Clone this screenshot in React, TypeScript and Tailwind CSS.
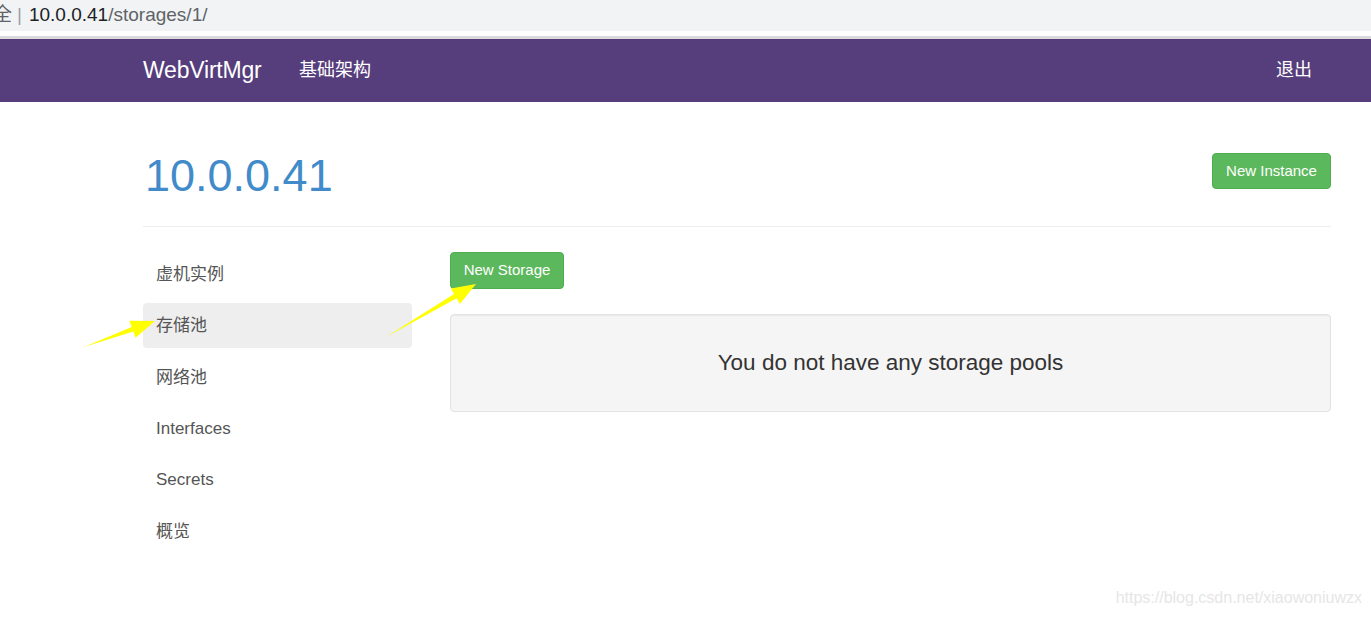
const sans = { fontFamily: '"Liberation Sans", "Noto Sans CJK SC", Arial, sans-serif' };

const arrow = (x1: number, y1: number, x2: number, y2: number, head = 24, hw = 9, sw = 2.5) => {
  const dx = x2 - x1;
  const dy = y2 - y1;
  const len = Math.hypot(dx, dy);
  const ux = dx / len;
  const uy = dy / len;
  const px = -uy;
  const py = ux;
  const bx = x2 - ux * head;
  const by = y2 - uy * head;
  const pts = [
    [x1, y1],
    [bx - px * sw, by - py * sw],
    [bx - px * hw, by - py * hw],
    [x2, y2],
    [bx + px * hw, by + py * hw],
    [bx + px * sw, by + py * sw],
  ];
  return pts.map((p) => p.join(",")).join(" ");
};

const navItems = ["虚机实例", "存储池", "网络池", "Interfaces", "Secrets", "概览"];

export default function App() {
  return (
    <div className="relative w-full h-[620px] overflow-hidden bg-white" style={sans}>
      {/* browser address bar */}
      <div className="h-[31px] bg-[#f1f3f4] flex items-center text-[19px]">
        <span className="ml-[-7px] text-[#5f6368]">全</span>
        <span className="ml-[5px] text-[#9aa0a6]">|</span>
        <span className="ml-[7px] text-[#202124]">10.0.0.41</span>
        <span className="text-[#5f6368]">/storages/1/</span>
      </div>
      <div className="h-[5px] bg-white" />
      <div className="h-[3px] bg-[#dadada]" />

      {/* navbar */}
      <nav className="h-[63px] bg-[#563d7c] flex items-center pl-[143px] pr-[59px] text-white">
        <span className="w-[156px] text-[23px] tracking-[-0.2px]">WebVirtMgr</span>
        <span className="text-[18px]">基础架构</span>
        <span className="ml-auto text-[18px]">退出</span>
      </nav>

      <main className="pl-[143px] pr-[40px]">
        <div className="flex justify-between items-start pt-[49px]">
          <h1 className="text-[45px] leading-[50px] text-[#428bca] pl-[2px]">10.0.0.41</h1>
          <button className="mt-[2px] h-[36px] w-[119px] rounded-[4px] bg-[#5cb85c] border border-[#4cae4c] text-white text-[15px]">
            New Instance
          </button>
        </div>
        <div className="mt-[25px] h-px bg-[#eeeeee]" />

        <div className="flex mt-[23px]">
          <ul className="w-[269px] flex flex-col gap-[6.4px] pt-[2px]">
            {navItems.map((item) => (
              <li
                key={item}
                className={
                  "h-[45px] flex items-center pl-[13px] rounded-[4px] text-[17px] text-[#555] " +
                  (item === "存储池" ? "bg-[#eeeeee]" : "")
                }
              >
                {item}
              </li>
            ))}
          </ul>

          <div className="flex-1 ml-[38px]">
            <button className="mt-[2px] h-[37px] w-[114px] rounded-[4px] bg-[#5cb85c] border border-[#4cae4c] text-white text-[15px]">
              New Storage
            </button>
            <div className="mt-[25px] h-[98px] rounded-[4px] bg-[#f5f5f5] border border-[#e3e3e3] shadow-[inset_0_1px_1px_rgba(0,0,0,0.05)] flex items-center justify-center">
              <span className="text-[22.5px] text-[#333]">You do not have any storage pools</span>
            </div>
          </div>
        </div>
      </main>

      {/* annotation arrows */}
      <svg className="absolute inset-0 pointer-events-none" width="1371" height="620">
        <polygon points={arrow(84, 347, 155, 321)} fill="#ffff00" />
        <polygon points={arrow(386, 337, 476, 284)} fill="#ffff00" />
      </svg>

      <div className="absolute right-[9px] bottom-[10px] text-[16px] text-[#e6e6e6]">
        https://blog.csdn.net/xiaowoniuwzx
      </div>
    </div>
  );
}
